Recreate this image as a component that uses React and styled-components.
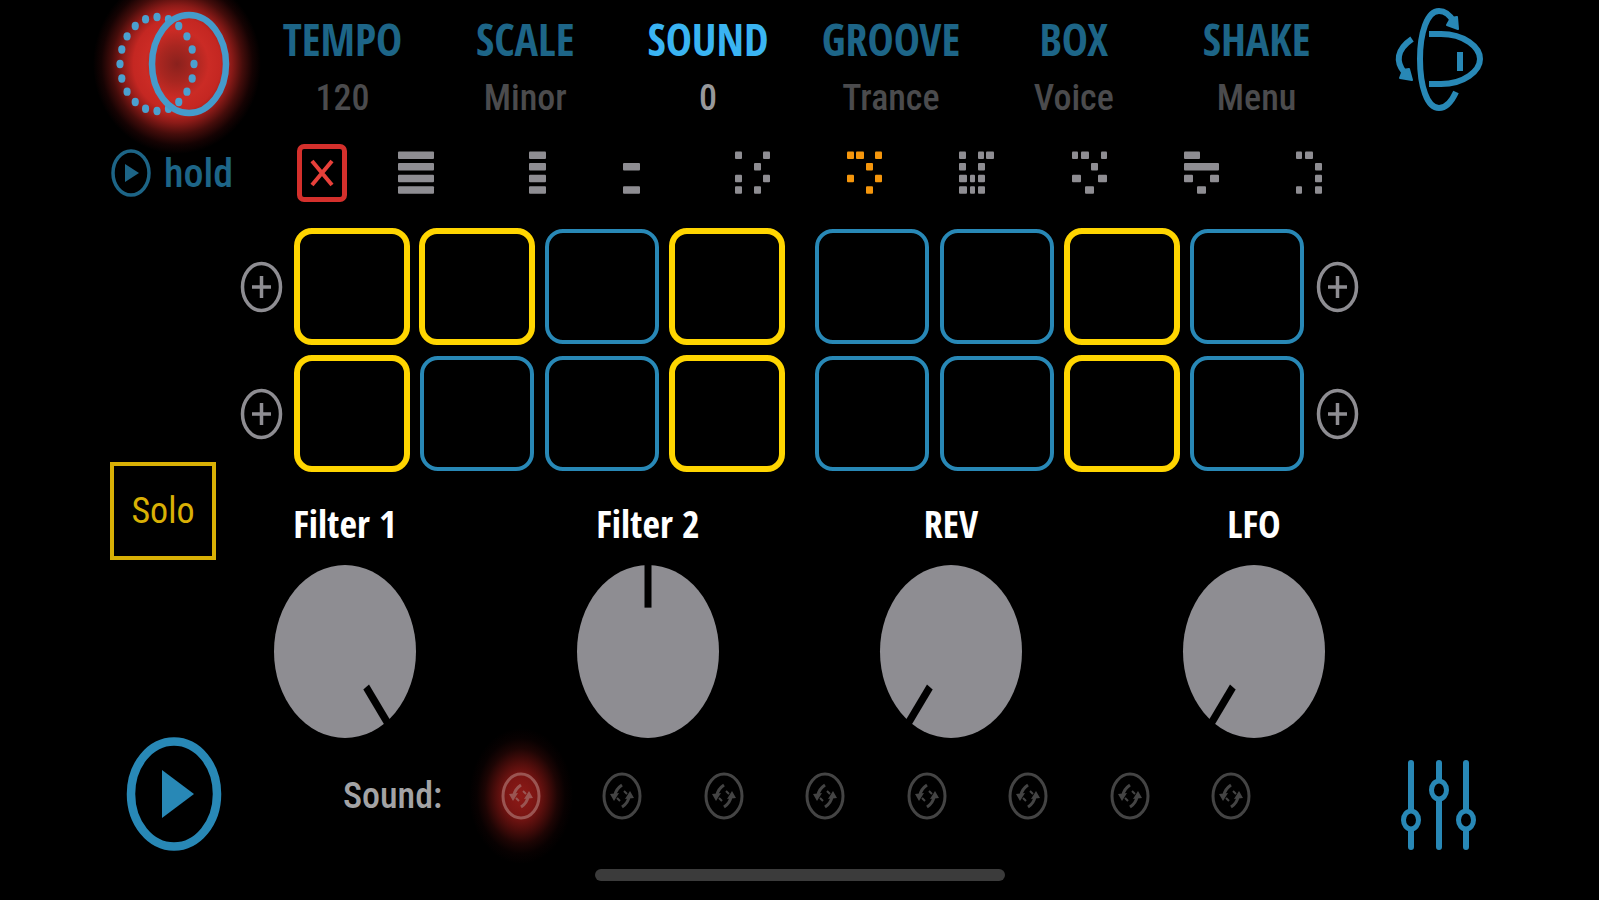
import React, { useState } from 'react'
import styled, { createGlobalStyle } from 'styled-components'

const BLUE = '#2888b6'
const DIM_BLUE = '#1d6587'
const YELLOW = '#ffd500'
const GREY = '#8e8d92'

const GlobalStyle = createGlobalStyle`
* {
  box-sizing: border-box;
}
body {
  margin: 0;
  background: #000;
  color: #fff;
  font-family: "Roboto Condensed", Roboto, "Liberation Sans", sans-serif;
}
button {
  padding: 0;
  border: 0;
  background: none;
  color: inherit;
  font: inherit;
  cursor: pointer;
}
svg {
  display: block;
  overflow: visible;
}
`

const Page = styled.div`
  min-height: 100vh;
  overflow: hidden;
  background: #000;
`

const Layout = styled.div`
  display: grid;
  grid-template-columns: 130px minmax(0, 1fr) 160px;
  padding: 0 80px 0 110px;
`

const Rail = styled.aside`
  display: flex;
  flex-direction: column;
  align-items: center;
  justify-content: ${props => (props.$spread ? 'space-between' : 'flex-start')};
`

const HoldButton = styled.button`
  display: flex;
  align-items: center;
  align-self: flex-start;
  gap: 14px;
  height: 90px;
  color: ${DIM_BLUE};
  font-size: 40px;
  font-weight: 500;
`

const SoloButton = styled.button`
  align-self: flex-start;
  width: 106px;
  height: 98px;
  margin: 244px 0 176px;
  border: 4px solid #d9b005;
  color: #d9b005;
  font-size: 36px;
`

const Main = styled.main`
  display: flex;
  flex-direction: column;
`

const Nav = styled.nav`
  display: grid;
  grid-template-columns: repeat(6, 1fr);
  height: 128px;
  padding: 0 11px;
`

const NavItem = styled.button`
  display: flex;
  flex-direction: column;
  align-items: center;
  color: ${props => (props.$active ? '#3ab4f2' : DIM_BLUE)};
`

const NavTitle = styled.span`
  font-family: "Open Sans Condensed", "Open Sans", sans-serif;
  font-size: 44px;
  font-weight: 700;
  line-height: 78px;
`

const NavValue = styled.span`
  color: ${props => (props.$active ? '#98989b' : '#4b4b4d')};
  font-size: 36px;
  font-weight: 500;
  line-height: 40px;
`

const Presets = styled.div`
  display: flex;
  align-items: center;
  gap: 51px;
  height: 90px;
  padding: 0 27px 0 57px;
`

const ClearButton = styled.button`
  display: grid;
  place-items: center;
  width: 50px;
  height: 58px;
  border: 5px solid #d4302c;
  border-radius: 7px;
`

const PresetList = styled.div`
  display: flex;
  flex: 1;
  justify-content: space-between;
`

const Pads = styled.div`
  display: flex;
  flex-direction: column;
  gap: 8px;
  padding-top: 9px;
`

const PadRow = styled.div`
  display: flex;
  align-items: center;
  gap: 10px;
`

const PadGroups = styled.div`
  display: grid;
  flex: 1;
  grid-template-columns: 1fr 1fr;
  gap: 27px;
`

const PadGroup = styled.div`
  display: grid;
  grid-template-columns: repeat(4, 1fr);
  gap: 7px;
`

const Pad = styled.button`
  height: ${props => (props.$on ? 117 : 115)}px;
  margin: ${props => (props.$on ? 1 : 2)}px;
  border: ${props => (props.$on ? `6px solid ${YELLOW}` : `4px solid ${BLUE}`)};
  border-radius: 18px;
`

const Knobs = styled.div`
  display: flex;
  justify-content: space-between;
  margin-top: 30px;
  padding: 0 34px;
`

const KnobBox = styled.label`
  position: relative;
  display: flex;
  flex-direction: column;
  align-items: center;
  gap: 22px;
  width: 142px;
  font-family: "Open Sans Condensed", "Open Sans", sans-serif;
  font-size: 38px;
  font-weight: 700;
  line-height: 40px;
`

const KnobRange = styled.input`
  position: absolute;
  inset: 62px 0 0;
  width: 100%;
  height: 173px;
  margin: 0;
  opacity: 0;
  cursor: pointer;
`

const Sounds = styled.div`
  display: flex;
  align-items: center;
  height: 48px;
  margin-top: 34px;
  padding: 0 108px 0 103px;
`

const SoundsLabel = styled.span`
  width: 158px;
  color: #a3a3a5;
  font-size: 36px;
  font-weight: 500;
  line-height: 48px;
`

const SoundList = styled.div`
  display: flex;
  flex: 1;
  justify-content: space-between;
`

const HomeBar = styled.div`
  width: 410px;
  height: 12px;
  margin: 17px auto 0;
  border-radius: 6px;
  background: #3b3b3b;
`

const tabs = [
  { title: 'TEMPO', value: '120' },
  { title: 'SCALE', value: 'Minor' },
  { title: 'SOUND', value: '0' },
  { title: 'GROOVE', value: 'Trance' },
  { title: 'BOX', value: 'Voice' },
  { title: 'SHAKE', value: 'Menu' },
]

// four rows per preset, every entry is [x, width]
const presets = [
  { name: 'All', rows: [[[0, 36]], [[0, 36]], [[0, 36]], [[0, 36]]] },
  { name: 'Right half', rows: [[[19, 17]], [[19, 17]], [[19, 17]], [[19, 17]]] },
  { name: 'Left pairs', rows: [[], [[0, 17]], [], [[0, 17]]] },
  { name: 'Pattern 4', rows: [[[0, 7], [28, 7]], [[19, 7]], [[0, 7], [28, 7]], [[0, 7], [19, 7]]] },
  { name: 'Pattern 5', on: true, rows: [[[0, 7], [9, 8], [28, 7]], [[19, 7]], [[0, 7], [28, 7]], [[19, 7]]] },
  { name: 'Pattern 6', rows: [[[0, 7], [19, 6], [27, 8]], [[0, 7], [19, 7]], [[0, 8], [11, 5], [19, 7]], [[0, 8], [11, 5], [19, 7]]] },
  { name: 'Pattern 7', rows: [[[0, 6], [9, 8], [29, 6]], [[19, 7]], [[0, 9], [26, 9]], [[13, 9]]] },
  { name: 'Pattern 8', rows: [[[0, 16]], [[0, 35]], [[0, 9], [26, 9]], [[13, 9]]] },
  { name: 'Pattern 9', rows: [[[0, 6], [9, 8]], [[19, 7]], [[19, 7]], [[0, 6], [19, 7]]] },
]

const startPads = [
  [[1, 1, 0, 1], [0, 0, 1, 0]],
  [[1, 0, 0, 1], [0, 0, 1, 0]],
]

const startKnobs = [
  { name: 'Filter 1', value: 144 },
  { name: 'Filter 2', value: 0 },
  { name: 'REV', value: -144 },
  { name: 'LFO', value: -144 },
]

const dots = Array.from({ length: 20 }, (_, i) => (i * Math.PI) / 10)

const Logo = () => (
  <svg width="130" height="128" viewBox="0 0 130 128" aria-hidden="true">
    <defs>
      <radialGradient id="logoGlow">
        <stop offset="0" stopColor="#8a211d" />
        <stop offset="0.2" stopColor="#a82620" />
        <stop offset="0.38" stopColor="#cb2b25" />
        <stop offset="0.52" stopColor="#c42722" />
        <stop offset="0.65" stopColor="#8d1b18" />
        <stop offset="0.78" stopColor="#450d0b" />
        <stop offset="0.9" stopColor="#150303" />
        <stop offset="1" stopColor="#000" />
      </radialGradient>
    </defs>
    <ellipse cx="67" cy="64" rx="84" ry="90" fill="url(#logoGlow)" />
    {dots.map(a => (
      <ellipse key={a} cx={47 + 37 * Math.cos(a)} cy={64 + 47 * Math.sin(a)} rx="3.6" ry="4.2" fill="#4ba0cf" />
    ))}
    <ellipse cx="79" cy="64" rx="37" ry="49" fill="none" stroke="#459bcb" strokeWidth="6.5" />
  </svg>
)

const HoldIcon = () => (
  <svg width="40" height="48" viewBox="0 0 40 48" aria-hidden="true">
    <ellipse cx="21" cy="24" rx="18" ry="22" fill="none" stroke={DIM_BLUE} strokeWidth="3.5" />
    <path d="M15 15L29 24L15 33Z" fill={DIM_BLUE} />
  </svg>
)

const PlayIcon = () => (
  <svg width="94" height="116" viewBox="0 0 94 116" aria-hidden="true">
    <ellipse cx="46" cy="58" rx="43" ry="52.5" fill="none" stroke={BLUE} strokeWidth="8.5" />
    <path d="M34 34L66 58L34 82Z" fill={BLUE} />
  </svg>
)

const OrbitIcon = () => (
  <svg width="120" height="120" viewBox="0 0 120 120" aria-hidden="true">
    <g fill="none" stroke={BLUE} strokeWidth="6">
      <path d="M75 22C71 15 66 11 60 11C48 11 41 33 41 59C41 86 48 108 60 108C67 108 72 103 77 92" />
      <path d="M50 34H62C85 34 101 47 101 59C101 71 85 84 62 84H50" />
      <path d="M33 39C17 50 17 62 25 72" />
      <path d="M81 52V71" />
    </g>
    <path d="M68 25L72 18L78 17L79 29Z M21 78L24 70L30 69L33 80Z" fill={BLUE} stroke={BLUE} strokeWidth="2" strokeLinejoin="round" />
  </svg>
)

const MixerIcon = () => (
  <svg width="90" height="94" viewBox="0 0 90 94" aria-hidden="true">
    <g fill="#000" stroke={BLUE} strokeWidth="6" strokeLinecap="round">
      <path d="M17 5V89M45 5V89M72 5V89" />
      <ellipse cx="17" cy="62" rx="7.5" ry="9" strokeWidth="5" />
      <ellipse cx="45" cy="32" rx="7.5" ry="9" strokeWidth="5" />
      <ellipse cx="72" cy="62" rx="7.5" ry="9" strokeWidth="5" />
    </g>
  </svg>
)

const PlusIcon = () => (
  <svg width="43" height="52" viewBox="0 0 43 52" aria-hidden="true">
    <ellipse cx="21.5" cy="26" rx="19" ry="23.5" fill="none" stroke={GREY} strokeWidth="3.5" />
    <path d="M12 26H31M21.5 15V37" stroke={GREY} strokeWidth="3.5" />
  </svg>
)

const SoundIcon = ({ on }) => (
  <svg width="40" height="48" viewBox="-20 -24 40 48" aria-hidden="true">
    {on && (
      <g>
        <defs>
          <radialGradient id="soundGlow">
            <stop offset="0" stopColor="#8e1a17" />
            <stop offset="0.3" stopColor="#7a1513" />
            <stop offset="0.5" stopColor="#4d0d0b" />
            <stop offset="0.7" stopColor="#1d0504" />
            <stop offset="0.85" stopColor="#080101" />
            <stop offset="1" stopColor="#000" />
          </radialGradient>
        </defs>
        <ellipse rx="52" ry="68" fill="url(#soundGlow)" />
      </g>
    )}
    <g fill="none" stroke={on ? '#9a5552' : '#444'} strokeWidth="3">
      <ellipse rx="18" ry="22" />
      <path d="M-7 -1Q-6 -7 0 -11M7 1Q6 7 0 11" />
      <path d="M-5 2L-2 5M5 -2L2 -5" strokeWidth="2" />
    </g>
    <path d="M-12 -2L-3 -3L-8 5Z M12 2L3 3L8 -5Z" fill={on ? '#9a5552' : '#444'} />
  </svg>
)

const PresetIcon = ({ preset, on }) => (
  <svg width="36" height="44" viewBox="0 0 36 44" aria-hidden="true">
    {preset.rows.map((row, y) =>
      row.map(([x, w]) => (
        <rect key={`${y}-${x}`} x={x} y={y * 11.6 + 0.5} width={w} height="7.5" rx="1" fill={on ? '#f5960c' : GREY} />
      ))
    )}
  </svg>
)

const Knob = ({ name, value, onChange }) => (
  <KnobBox>
    {name}
    <svg width="142" height="173" viewBox="0 0 142 142" preserveAspectRatio="none" aria-hidden="true">
      <circle cx="71" cy="71" r="71" fill={GREY} />
      <path d="M71 -1V35" stroke="#000" strokeWidth="7" transform={`rotate(${value} 71 71)`} />
    </svg>
    <KnobRange type="range" min="-144" max="144" value={value} onChange={onChange} />
  </KnobBox>
)

export default function App() {
  const [tab, setTab] = useState('SOUND')
  const [preset, setPreset] = useState('Pattern 5')
  const [pads, setPads] = useState(startPads)
  const [knobs, setKnobs] = useState(startKnobs)
  const [sound, setSound] = useState(0)

  const togglePad = (r, g, i) =>
    setPads(
      pads.map((row, y) =>
        row.map((group, x) => group.map((on, n) => (y === r && x === g && n === i ? 1 - on : on)))
      )
    )

  const turnKnob = (name, value) =>
    setKnobs(knobs.map(knob => (knob.name === name ? { ...knob, value } : knob)))

  return (
    <Page>
      <GlobalStyle />
      <Layout>
        <Rail>
          <button aria-label="Record">
            <Logo />
          </button>
          <HoldButton>
            <HoldIcon />
            hold
          </HoldButton>
          <SoloButton>Solo</SoloButton>
          <button aria-label="Play">
            <PlayIcon />
          </button>
        </Rail>

        <Main>
          <Nav>
            {tabs.map(({ title, value }) => (
              <NavItem key={title} $active={tab === title} onClick={() => setTab(title)}>
                <NavTitle>{title}</NavTitle>
                <NavValue $active={tab === title}>{value}</NavValue>
              </NavItem>
            ))}
          </Nav>

          <Presets>
            <ClearButton aria-label="Clear">
              <svg width="24" height="28" viewBox="0 0 24 28" aria-hidden="true">
                <path d="M2 2L22 26M22 2L2 26" stroke="#e8403a" strokeWidth="4" />
              </svg>
            </ClearButton>
            <PresetList>
              {presets.map(p => (
                <button key={p.name} aria-label={p.name} onClick={() => setPreset(p.name)}>
                  <PresetIcon preset={p} on={preset === p.name} />
                </button>
              ))}
            </PresetList>
          </Presets>

          <Pads>
            {pads.map((row, r) => (
              <PadRow key={r}>
                <button aria-label="Add before">
                  <PlusIcon />
                </button>
                <PadGroups>
                  {row.map((group, g) => (
                    <PadGroup key={g}>
                      {group.map((on, i) => (
                        <Pad
                          key={i}
                          $on={on}
                          aria-label={`Pad ${g * 4 + i + 1}`}
                          aria-pressed={!!on}
                          onClick={() => togglePad(r, g, i)}
                        />
                      ))}
                    </PadGroup>
                  ))}
                </PadGroups>
                <button aria-label="Add after">
                  <PlusIcon />
                </button>
              </PadRow>
            ))}
          </Pads>

          <Knobs>
            {knobs.map(knob => (
              <Knob key={knob.name} {...knob} onChange={e => turnKnob(knob.name, Number(e.target.value))} />
            ))}
          </Knobs>

          <Sounds>
            <SoundsLabel>Sound:</SoundsLabel>
            <SoundList>
              {Array.from({ length: 8 }, (_, i) => (
                <button key={i} aria-label={`Sound ${i + 1}`} onClick={() => setSound(i)}>
                  <SoundIcon on={sound === i} />
                </button>
              ))}
            </SoundList>
          </Sounds>
        </Main>

        <Rail $spread>
          <button aria-label="Rotate">
            <OrbitIcon />
          </button>
          <button aria-label="Mixer">
            <MixerIcon />
          </button>
        </Rail>
      </Layout>
      <HomeBar />
    </Page>
  )
}
